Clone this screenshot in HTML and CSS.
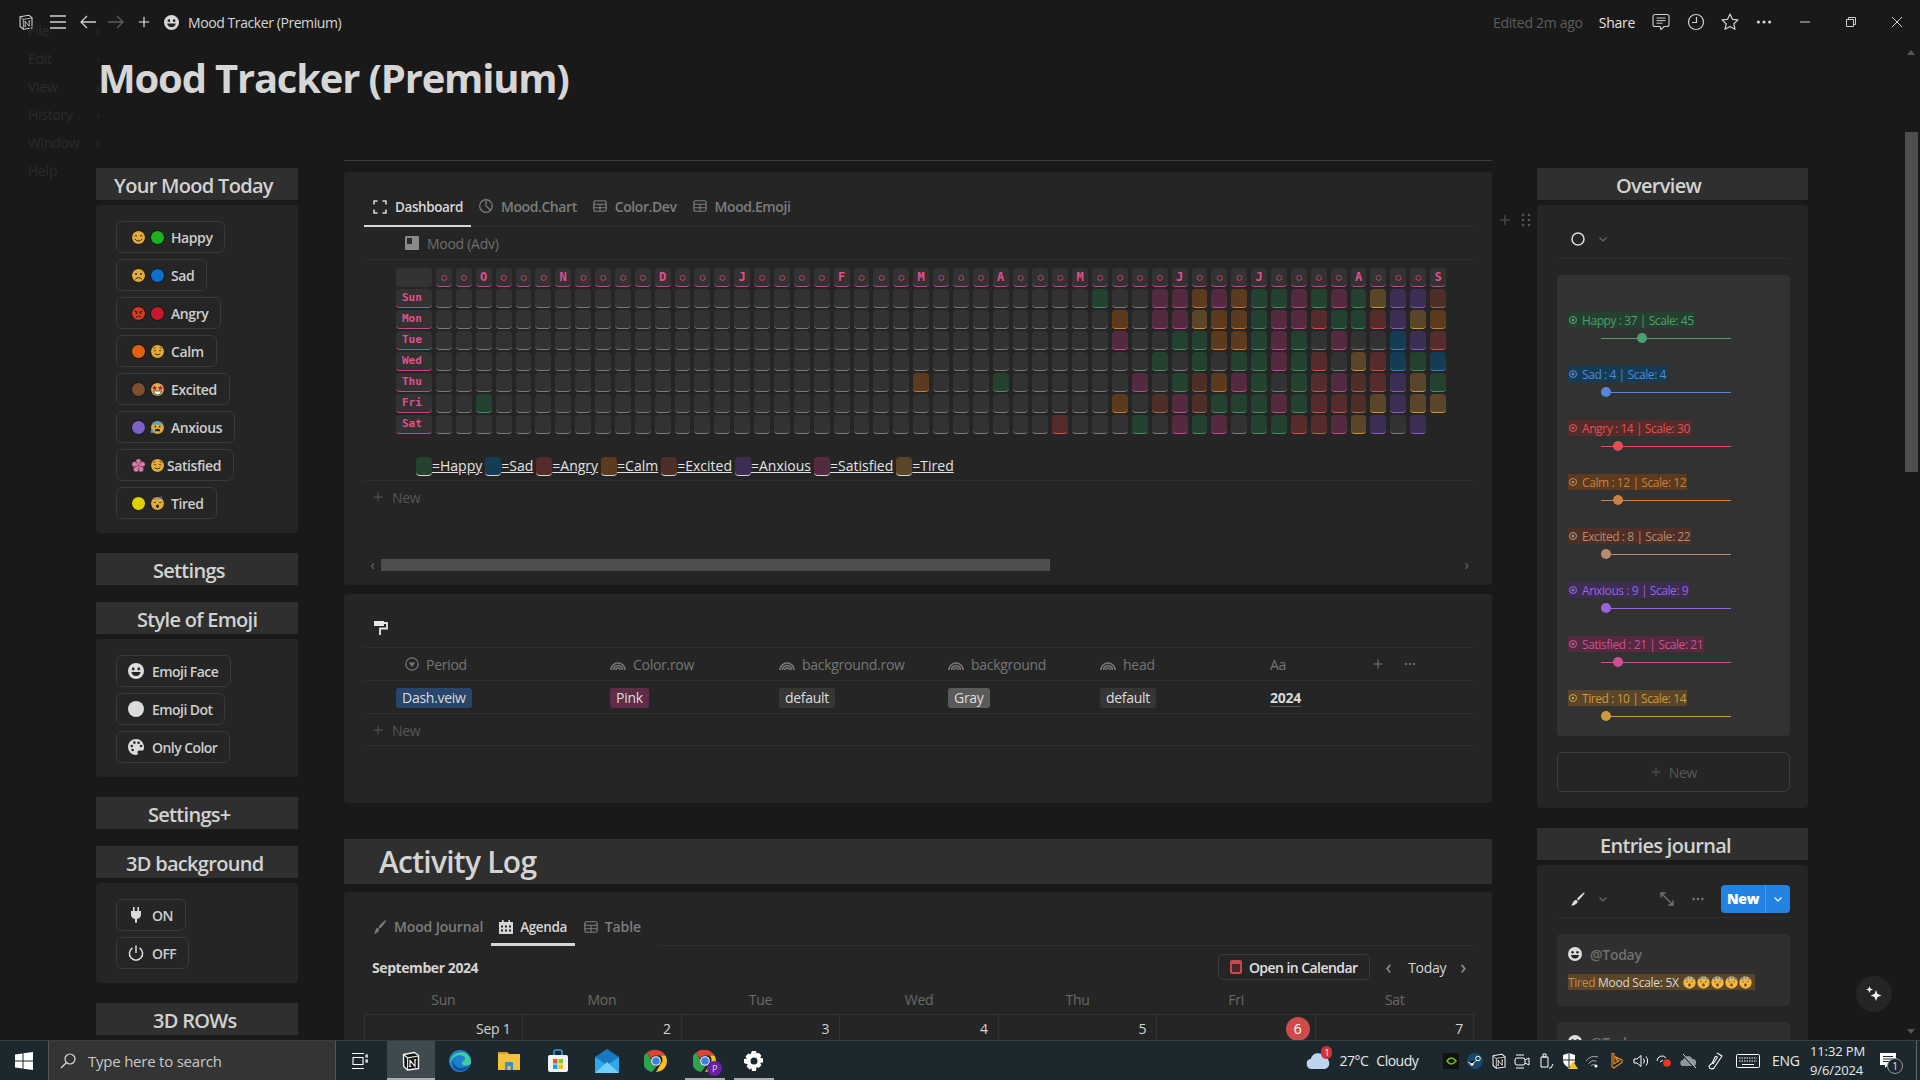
FILE: index.html
```html
<!DOCTYPE html>
<html lang="en">
<head>
<meta charset="utf-8">
<title>Mood Tracker (Premium)</title>
<link rel="stylesheet" href="styles.css">
</head>
<body>
<svg class="defs" aria-hidden="true">
  <symbol id="smile" viewBox="0 0 16 16"><circle cx="8" cy="8" r="7.4" fill="#e3ad3b" stroke="#111"/><path d="M4 6.5q1.2-1.4 2.4 0M9.6 6.5q1.2-1.4 2.4 0" fill="none" stroke="#222"/><path d="M4 9.5q4 4.5 8 0" fill="none" stroke="#222"/></symbol>
  <symbol id="sad" viewBox="0 0 16 16"><circle cx="8" cy="8" r="7.4" fill="#e3ad3b" stroke="#111"/><circle cx="5.4" cy="6.4" r="1" fill="#222"/><circle cx="10.6" cy="6.4" r="1" fill="#222"/><path d="M4.6 12q3.4-3.4 6.8 0" fill="none" stroke="#222"/></symbol>
  <symbol id="angry" viewBox="0 0 16 16"><circle cx="8" cy="8" r="7.4" fill="#d93c1c" stroke="#111"/><path d="M3.6 5l3.4 1.8M12.4 5L9 6.8" stroke="#222" stroke-width="1.2"/><circle cx="5.6" cy="7.6" r=".9" fill="#222"/><circle cx="10.4" cy="7.6" r=".9" fill="#222"/><path d="M5 12q3-2.4 6 0" fill="none" stroke="#222"/></symbol>
  <symbol id="calm" viewBox="0 0 16 16"><circle cx="8" cy="8" r="7.4" fill="#e3ad3b" stroke="#111"/><path d="M4 6.8q1.2 1.2 2.4 0M9.6 6.8q1.2 1.2 2.4 0M3.6 4.6l2.2-.8M12.4 4.6l-2.2-.8" fill="none" stroke="#222" stroke-width=".8"/><path d="M5 10.4q3 2.6 6 0" fill="none" stroke="#222"/></symbol>
  <symbol id="star" viewBox="0 0 16 16"><circle cx="8" cy="8" r="7.4" fill="#e3ad3b" stroke="#111"/><path d="M4.9 3.6l.9 1.6 1.7.3-1.2 1.3.2 1.8-1.6-.8-1.6.8.2-1.8-1.2-1.3 1.7-.3zM11.1 3.6l.9 1.6 1.7.3-1.2 1.3.2 1.8-1.6-.8-1.6.8.2-1.8-1.2-1.3 1.7-.3z" fill="#b0127a"/><path d="M3.8 9.6h8.4q-.6 4.2-4.2 4.2T3.8 9.6z" fill="#fff" stroke="#222" stroke-width=".7"/></symbol>
  <symbol id="anxious" viewBox="0 0 16 16"><circle cx="8" cy="8" r="7.4" fill="#e3ad3b" stroke="#111"/><path d="M2 5a7 7 0 0 1 12 0z" fill="#4aa3d8"/><circle cx="5.6" cy="7" r=".9" fill="#222"/><circle cx="10.4" cy="7" r=".9" fill="#222"/><path d="M5.2 12q0-2.6 2.8-2.6t2.8 2.6z" fill="#222"/><path d="M2.2 9q2 3 1.2 4.6a1.8 1.8 0 0 1-3-1z" fill="#2aa0e0"/></symbol>
  <symbol id="flower" viewBox="0 0 16 16"><g fill="#d47ba6" stroke="#111" stroke-width=".5"><circle cx="8" cy="3.7" r="3"/><circle cx="12.2" cy="6.7" r="3"/><circle cx="10.6" cy="11.9" r="3"/><circle cx="5.4" cy="11.9" r="3"/><circle cx="3.8" cy="6.7" r="3"/></g><circle cx="8" cy="8" r="2.6" fill="#d47ba6"/><circle cx="8" cy="8" r="1" fill="#c2126a"/></symbol>
  <symbol id="sleep" viewBox="0 0 16 16"><circle cx="8" cy="8" r="7.4" fill="#e3ad3b" stroke="#111"/><path d="M3.6 6.6q1.4 1 2.8 0M9.6 6.6q1.4 1 2.8 0" fill="none" stroke="#222" stroke-width=".8"/><ellipse cx="8" cy="11" rx="1.6" ry="1.9" fill="#222"/><path d="M8 1.4l1.6 0-1.4 1.6h1.6M11 .8h1.6l-1.4 1.6h1.6M4.6 1.8h1.6L4.8 3.4h1.6" fill="none" stroke="#4a6ed8" stroke-width=".8"/></symbol>
  <symbol id="sleep-y" viewBox="0 0 16 16"><circle cx="8" cy="8" r="7.6" fill="#f3b941"/><path d="M3.6 6.8q1.4 1 2.8 0M9.6 6.8q1.4 1 2.8 0" fill="none" stroke="#6b4a12" stroke-width=".9"/><ellipse cx="8" cy="11" rx="1.7" ry="2" fill="#7a4a12"/><path d="M3 2h2.4L3.4 4h2.2M7 .8h2.4l-2 2h2.2M11 2h2.4l-2 2h2.2" fill="none" stroke="#3d78d0"/></symbol>
  <symbol id="table" viewBox="0 0 16 16"><rect x="1" y="2" width="14" height="12" rx="2" fill="none" stroke="currentColor" stroke-width="1.4"/><path d="M1 6h14M1 10h14M8 6v8" stroke="currentColor" stroke-width="1.2"/></symbol>
  <symbol id="rainbow" viewBox="0 0 16 16"><path d="M1 14a7 7 0 0 1 14 0M3.600 14a4.400 4.400 0 0 1 8.800 0M6 14a2 2 0 0 1 4 0" fill="none" stroke="currentColor" stroke-width="1.700"/></symbol>
  <symbol id="plus" viewBox="0 0 16 16"><path d="M8 2v12M2 8h12" stroke="currentColor" stroke-width="1.3"/></symbol>
  <symbol id="dots" viewBox="0 0 16 16"><g fill="currentColor"><circle cx="3" cy="8" r="1.4"/><circle cx="8" cy="8" r="1.4"/><circle cx="13" cy="8" r="1.4"/></g></symbol>
  <symbol id="chev" viewBox="0 0 10 10"><path d="M1.5 3.5L5 7l3.5-3.5" fill="none" stroke="currentColor" stroke-width="1.1"/></symbol>
  <symbol id="face-w" viewBox="0 0 16 16"><circle cx="8" cy="8" r="8" fill="currentColor"/><circle cx="5.2" cy="6" r="1.4" fill="#252525"/><circle cx="10.8" cy="6" r="1.4" fill="#252525"/><path d="M3.4 9h9.2q-.8 4-4.6 4T3.4 9z" fill="#252525"/></symbol>
  <symbol id="notion" viewBox="0 0 20 20"><path d="M2.5 3.5L13.5 1.5l4 3v13l-11 1.5-3.8-3.4z" fill="#111" stroke="currentColor" stroke-width="1.4" stroke-linejoin="round"/><path d="M2.8 3.8l3.8 3 10.8-1.8M6.6 6.8V19" fill="none" stroke="currentColor" stroke-width="1.1"/><path d="M9 9.2v6M9 9.4l5 6V8.8M8 15.4h2.2M8.4 9.3h1.4M13 8.8h2.2" fill="none" stroke="currentColor" stroke-width="1.2"/></symbol>
</svg>

<div class="app">
  <header class="topbar">
    <svg class="ic16 logo"><use href="#notion"/></svg>
    <svg class="ic16 menu-ic" viewBox="0 0 16 16"><path d="M0 2h16M0 8h16M0 14h16" stroke="currentColor" stroke-width="1.4"/></svg>
    <svg class="ic16 back-ic" viewBox="0 0 16 16"><path d="M1 8h15M7 2L1 8l6 6" fill="none" stroke="currentColor" stroke-width="1.3"/></svg>
    <svg class="ic16 fwd-ic" viewBox="0 0 16 16"><path d="M0 8h15M9 2l6 6-6 6" fill="none" stroke="currentColor" stroke-width="1.3"/></svg>
    <svg class="ic14 add-ic"><use href="#plus"/></svg>
    <svg class="ic15 page-ic"><use href="#face-w"/></svg>
    <span class="page-name">Mood Tracker (Premium)</span>
    <span class="edited">Edited 2m ago</span>
    <span class="share">Share</span>
    <svg class="ic18 comment-ic" viewBox="0 0 18 18"><path d="M3 1.5h12a2 2 0 0 1 2 2v8a2 2 0 0 1-2 2h-3l-3 3-1-3H3a2 2 0 0 1-2-2v-8a2 2 0 0 1 2-2z" fill="none" stroke="currentColor" stroke-width="1.1"/><path d="M4.5 5h9M4.5 7.6h9M4.5 10.2h6" stroke="currentColor"/></svg>
    <svg class="ic18 clock-ic" viewBox="0 0 18 18"><circle cx="9" cy="9" r="7.5" fill="none" stroke="currentColor" stroke-width="1.2"/><path d="M9.5 4v5.5H5" fill="none" stroke="currentColor" stroke-width="1.2"/></svg>
    <svg class="ic18 star-ic" viewBox="0 0 18 18"><path d="M9 1l2.4 5.3 5.6.6-4.2 3.8 1.2 5.6L9 13.4l-5 2.9 1.2-5.6L1 6.9l5.6-.6z" fill="none" stroke="currentColor" stroke-width="1.2" stroke-linejoin="round"/></svg>
    <svg class="ic18 more-ic"><use href="#dots"/></svg>
    <svg class="win-ic min-ic" viewBox="0 0 10 10"><path d="M0 5h10" stroke="currentColor"/></svg>
    <svg class="win-ic max-ic" viewBox="0 0 10 10"><path d="M.5 2.5h7v7h-7zM2.5 2.5v-2h7v7h-2" fill="none" stroke="currentColor"/></svg>
    <svg class="win-ic close-ic" viewBox="0 0 10 10"><path d="M0 0l10 10M10 0L0 10" stroke="currentColor"/></svg>
  </header>

  <main class="page">
    <h1 class="title">Mood Tracker (Premium)</h1>
    <div class="columns">
      <aside class="left">
        <h2 class="bar l-mood">Your Mood Today</h2>
        <div class="panel btns">
          <a class="btn"><svg class="ic15"><use href="#smile"/></svg><i class="dot d-green"></i><span class="lbl">Happy</span></a>
          <a class="btn"><svg class="ic15"><use href="#sad"/></svg><i class="dot d-blue"></i><span class="lbl">Sad</span></a>
          <a class="btn"><svg class="ic15"><use href="#angry"/></svg><i class="dot d-red"></i><span class="lbl">Angry</span></a>
          <a class="btn"><i class="dot d-orange"></i><svg class="ic15"><use href="#calm"/></svg><span class="lbl">Calm</span></a>
          <a class="btn"><i class="dot d-brown"></i><svg class="ic15"><use href="#star"/></svg><span class="lbl">Excited</span></a>
          <a class="btn"><i class="dot d-purple"></i><svg class="ic15"><use href="#anxious"/></svg><span class="lbl">Anxious</span></a>
          <a class="btn"><svg class="ic15"><use href="#flower"/></svg><svg class="ic15"><use href="#calm"/></svg><span class="lbl tight">Satisfied</span></a>
          <a class="btn"><i class="dot d-yellow"></i><svg class="ic15"><use href="#sleep"/></svg><span class="lbl">Tired</span></a>
        </div>
        <h2 class="bar gap-b l-settings">Settings</h2>
        <h2 class="bar gap-a l-style">Style of Emoji</h2>
        <div class="panel btns">
          <a class="btn solo"><svg class="ic16 wht"><use href="#face-w"/></svg><span class="lbl">Emoji Face</span></a>
          <a class="btn solo"><i class="wdot"></i><span class="lbl">Emoji Dot</span></a>
          <a class="btn solo"><svg class="ic16 wht" viewBox="0 0 16 16"><path d="M8 0a8 8 0 0 0 0 16c1.6 0 2-1 1.6-2-.5-1.4.4-2.4 1.8-2.4H14c1.2 0 2-1 2-3.2C16 3.4 12.4 0 8 0z" fill="currentColor"/><g fill="#252525"><circle cx="3.8" cy="7" r="1.3"/><circle cx="6.4" cy="3.6" r="1.3"/><circle cx="10.6" cy="3.8" r="1.3"/><circle cx="13" cy="7" r="1.3"/><circle cx="4.6" cy="11" r="1.3"/></g></svg><span class="lbl">Only Color</span></a>
        </div>
        <h2 class="bar gap-b l-plus">Settings+</h2>
        <h2 class="bar gap-a l-bg">3D background</h2>
        <div class="panel btns">
          <a class="btn solo"><svg class="ic16 wht" viewBox="0 0 16 16"><path d="M5 0h1.6v4H5zM9.4 0H11v4H9.4zM3 4h10v3.5a5 5 0 0 1-4 4.6V15a1 1 0 0 1-2 0v-2.9a5 5 0 0 1-4-4.6z" fill="currentColor"/></svg><span class="lbl">ON</span></a>
          <a class="btn solo"><svg class="ic16 wht" viewBox="0 0 16 16"><path d="M4.4 3a6.6 6.6 0 1 0 7.2 0M8 .5V8" fill="none" stroke="currentColor" stroke-width="1.5"/></svg><span class="lbl">OFF</span></a>
        </div>
        <h2 class="bar gap-b l-rows">3D ROWs</h2>
      </aside>

      <section class="mid">
        <div class="panel board">
          <nav class="tabs">
            <a class="tab active first"><svg class="ic14" viewBox="0 0 14 14"><path d="M1 4.5V1h3.5M9.5 1H13v3.5M13 9.5V13H9.5M4.5 13H1V9.5" fill="none" stroke="currentColor" stroke-width="1.6"/></svg>Dashboard</a>
            <a class="tab"><svg class="ic14" viewBox="0 0 14 14"><circle cx="7" cy="7" r="6.3" fill="none" stroke="currentColor" stroke-width="1.2"/><path d="M7 .7V7l4.5 4" fill="none" stroke="currentColor" stroke-width="1.2"/></svg>Mood.Chart</a>
            <a class="tab"><svg class="ic14"><use href="#table"/></svg>Color.Dev</a>
            <a class="tab"><svg class="ic14"><use href="#table"/></svg>Mood.Emoji</a>
          </nav>
          <div class="db-title"><svg class="ic14" viewBox="0 0 14 14"><rect width="14" height="14" rx="1" fill="#8a8a8a"/><rect x="2" y="2" width="5" height="6" fill="#2a2a2a"/></svg>Mood (Adv)</div>
          <div class="heat" id="heat"></div>
          <div class="legend">
            <span class="swatch k-g"></span><u>=Happy</u>
            <span class="swatch k-b"></span><u>=Sad</u>
            <span class="swatch k-r"></span><u>=Angry</u>
            <span class="swatch k-o"></span><u>=Calm</u>
            <span class="swatch k-e"></span><u>=Excited</u>
            <span class="swatch k-p"></span><u>=Anxious</u>
            <span class="swatch k-s"></span><u>=Satisfied</u>
            <span class="swatch k-t"></span><u>=Tired</u>
          </div>
          <div class="new-row"><svg class="ic12"><use href="#plus"/></svg>New</div>
          <div class="hscroll"><span class="arr">‹</span><span class="track"><i class="thumbx"></i></span><span class="arr">›</span></div>
        </div>

        <div class="panel cfg">
          <div class="roller"><svg class="ic16" viewBox="0 0 16 16"><path d="M1 1h10v5H1z" fill="#e6e6e6"/><path d="M11 3h3v5.5H7V15" fill="none" stroke="#e6e6e6" stroke-width="1.8"/></svg></div>
          <div class="cfg-grid cfg-head">
            <span class="th th-first"><svg class="ic14" viewBox="0 0 14 14"><circle cx="7" cy="7" r="6.2" fill="none" stroke="currentColor" stroke-width="1.2"/><path d="M3.8 5.5h6.4L7 10z" fill="currentColor"/></svg>Period</span>
            <span class="th"><svg class="ic16"><use href="#rainbow"/></svg>Color.row</span>
            <span class="th"><svg class="ic16"><use href="#rainbow"/></svg>background.row</span>
            <span class="th"><svg class="ic16"><use href="#rainbow"/></svg>background</span>
            <span class="th"><svg class="ic16"><use href="#rainbow"/></svg>head</span>
            <span class="th">Aa</span>
            <span class="th th-tools"><svg class="ic12"><use href="#plus"/></svg><svg class="ic12"><use href="#dots"/></svg></span>
          </div>
          <div class="cfg-grid cfg-row">
            <span><b class="tag t-blue">Dash.veiw</b></span>
            <span><b class="tag t-pink">Pink</b></span>
            <span><b class="tag t-dark">default</b></span>
            <span><b class="tag t-gray">Gray</b></span>
            <span><b class="tag t-dark">default</b></span>
            <span class="yr">2024</span>
            <span></span>
          </div>
          <div class="new-row last"><svg class="ic12"><use href="#plus"/></svg>New</div>
        </div>

        <h2 class="log-bar">Activity Log</h2>

        <div class="panel agenda">
          <nav class="tabs2">
            <a class="tab2"><svg class="ic14" viewBox="0 0 14 14"><path d="M13 0c.6.6-3 6-6 8.4L5.4 7C8 4 12.4-.6 13 0zM4.6 7.8l1.6 1.5C6 12 3 13.6 1 14c1.4-1.4 1-5 3.6-6.2z" fill="currentColor"/></svg>Mood Journal</a>
            <a class="tab2 on"><svg class="ic14" viewBox="0 0 14 14"><path d="M3 0h1.6v2h4.8V0H11v2h3v12H0V2h3z" fill="currentColor"/><path d="M2 5.5h2v2H2zM6 5.5h2v2H6zM10 5.5h2v2h-2zM2 9.5h2v2H2zM6 9.5h2v2H6zM10 9.5h2v2h-2z" fill="#252525"/></svg>Agenda</a>
            <a class="tab2"><svg class="ic14"><use href="#table"/></svg>Table</a>
            <span class="tab-fill"></span>
          </nav>
          <div class="cal-tools">
            <strong class="month">September 2024</strong>
            <a class="open-cal"><svg class="ic14" viewBox="0 0 14 14"><rect x="1" width="12" height="14" rx="2" fill="#c84a4a"/><rect x="3" y="4" width="8" height="8" fill="#4a2626"/></svg>Open in Calendar</a>
            <span class="nav-ar l">‹</span><span class="today">Today</span><span class="nav-ar r">›</span>
          </div>
          <div class="weekdays"><span>Sun</span><span>Mon</span><span>Tue</span><span>Wed</span><span>Thu</span><span>Fri</span><span>Sat</span></div>
          <div class="days">
            <span class="day">Sep 1</span><span class="day">2</span><span class="day">3</span><span class="day">4</span><span class="day">5</span><span class="day"><em class="now">6</em></span><span class="day">7</span>
          </div>
        </div>
      </section>

      <aside class="right">
        <h2 class="bar r-over">Overview</h2>
        <div class="panel over">
          <div class="gal-tools"><svg class="ic14" viewBox="0 0 14 14"><circle cx="7" cy="7" r="6" fill="none" stroke="#ddd" stroke-width="1.5"/></svg><svg class="ic10"><use href="#chev"/></svg></div>
          <div class="meter-card">
            <div class="meter m-g"><span class="m-lab"><i class="rad"></i>Happy : 37 | Scale: 45</span><div class="m-line"><i class="m-th" style="left:36px"></i></div></div>
            <div class="meter m-b"><span class="m-lab"><i class="rad"></i>Sad : 4 | Scale: 4</span><div class="m-line"><i class="m-th" style="left:0"></i></div></div>
            <div class="meter m-r"><span class="m-lab"><i class="rad"></i>Angry : 14 | Scale: 30</span><div class="m-line"><i class="m-th" style="left:12px"></i></div></div>
            <div class="meter m-o"><span class="m-lab"><i class="rad"></i>Calm : 12 | Scale: 12</span><div class="m-line"><i class="m-th" style="left:12px"></i></div></div>
            <div class="meter m-e"><span class="m-lab"><i class="rad"></i>Excited : 8 | Scale: 22</span><div class="m-line"><i class="m-th" style="left:0"></i></div></div>
            <div class="meter m-p"><span class="m-lab"><i class="rad"></i>Anxious : 9 | Scale: 9</span><div class="m-line"><i class="m-th" style="left:0"></i></div></div>
            <div class="meter m-s"><span class="m-lab"><i class="rad"></i>Satisfied : 21 | Scale: 21</span><div class="m-line"><i class="m-th" style="left:12px"></i></div></div>
            <div class="meter m-t"><span class="m-lab"><i class="rad"></i>Tired : 10 | Scale: 14</span><div class="m-line"><i class="m-th" style="left:0"></i></div></div>
          </div>
          <div class="new-btn"><svg class="ic12"><use href="#plus"/></svg>New</div>
        </div>
        <h2 class="bar gap-b r-ent">Entries journal</h2>
        <div class="panel ent">
          <div class="ent-tools">
            <svg class="ic14 wht" viewBox="0 0 14 14"><path d="M13.6.4c.5.5-3.6 6-6.2 8L6 7C8 4.400 13.100-.1 13.600.4zM5.200 7.800L6.700 9.300C6.300 12 3 14 0 13.500c1.700-1 1.500-4.900 5.200-5.700z" fill="currentColor"/></svg>
            <svg class="ic10"><use href="#chev"/></svg>
            <svg class="ic14 exp" viewBox="0 0 14 14"><path d="M1 1l12 12M1 5.500V1h4.500M13 8.500V13H8.500" fill="none" stroke="currentColor" stroke-width="1.300"/></svg>
            <svg class="ic14 ent-more"><use href="#dots"/></svg>
            <span class="blue-btn"><b>New</b><i><svg class="ic10"><use href="#chev"/></svg></i></span>
          </div>
          <article class="ent-card">
            <div class="ent-date"><svg class="ic14 wht"><use href="#face-w"/></svg>@Today</div>
            <div class="ent-line"><span class="tired">Tired</span> Mood Scale: 5X <svg class="ic13"><use href="#sleep-y"/></svg><svg class="ic13"><use href="#sleep-y"/></svg><svg class="ic13"><use href="#sleep-y"/></svg><svg class="ic13"><use href="#sleep-y"/></svg><svg class="ic13"><use href="#sleep-y"/></svg></div>
          </article>
          <article class="ent-card">
            <div class="ent-date"><svg class="ic14 wht"><use href="#face-w"/></svg>@Today</div>
          </article>
        </div>
      </aside>
    </div>
    <div class="block-tools"><svg class="ic14"><use href="#plus"/></svg><svg class="ic14" viewBox="0 0 14 14"><g fill="currentColor"><circle cx="4" cy="2" r="1.300"/><circle cx="10" cy="2" r="1.300"/><circle cx="4" cy="7" r="1.300"/><circle cx="10" cy="7" r="1.300"/><circle cx="4" cy="12" r="1.300"/><circle cx="10" cy="12" r="1.300"/></g></svg></div>
    <div class="vscroll"><span class="vup"></span><span class="vthumb"></span><span class="vdn"></span></div>
    <div class="spark"><svg class="ic18" viewBox="0 0 18 18"><path d="M11 5l1.500 4 4 1.500-4 1.500-1.500 4-1.500-4-4-1.500 4-1.500zM4.500 1l.9 2.600 2.600.9-2.600.9-.9 2.600-.9-2.600L1 4.500l2.600-.9z" fill="#eee"/></svg></div>
  </main>

  <nav class="ghost-menu"><span>File</span><span>Edit</span><span>View</span><span>History</span><span>Window</span><span>Help</span></nav>

  <footer class="taskbar">
    <svg class="tb-win" viewBox="0 0 18 18"><path d="M0 2.500l7.500-1v7H0zM8.500 1.300L18 0v8.500H8.500zM0 9.500h7.500v7L0 15.500zM8.500 9.500H18V18l-9.500-1.300z" fill="#fff"/></svg>
    <div class="tb-search"><svg class="ic16" viewBox="0 0 16 16"><circle cx="10" cy="6" r="5" fill="none" stroke="#ddd" stroke-width="1.200"/><path d="M6.500 9.500L1 15" stroke="#ddd" stroke-width="1.200"/></svg>Type here to search</div>
    <svg class="tb-view" viewBox="0 0 16 16"><path d="M0 .5h12M0 15.500h12M1 4.500h10v7H1zM14 2h2v2h-2zM14 7h2v2h-2z" fill="none" stroke="#fff" stroke-width="1.100"/></svg>
    <div class="tb-apps">
      <span class="app-t active"><svg class="ic20 n-wht"><use href="#notion"/></svg></span>
      <span class="app-t"><svg class="ic24" viewBox="0 0 24 24"><circle cx="12" cy="12" r="11" fill="#1f7fcf"/><path d="M2 14C2 6 10 2 16 3.500c5 1.500 7 6 7 9.500 0 3-3 3.500-6 3.500-2 0-3-1-3-2.500 0-2.500 3-2 3-4.500C17 7 13 5.500 9.500 6.500 5 8 3.500 11 2 14z" fill="#3ccf9a"/><path d="M9 21c-4-2-5-6-4-9 1 4 4 7 8 7 3 0 6-1 8-3-2 5-8 7-12 5z" fill="#0d4f9a"/></svg></span>
      <span class="app-t"><svg class="ic24" viewBox="0 0 24 24"><path d="M1 3h9l2 2h11v16H1z" fill="#f2c23e"/><path d="M1 3h9l2 2H1z" fill="#d99a1e"/><path d="M8 21v-7a1 1 0 0 1 1-1h6a1 1 0 0 1 1 1v7z" fill="#2f8fdc"/><path d="M10.500 21v-4h3v4z" fill="#f2c23e"/></svg></span>
      <span class="app-t"><svg class="ic24" viewBox="0 0 24 24"><path d="M8 6V3a2 2 0 0 1 2-2h4a2 2 0 0 1 2 2v3" fill="none" stroke="#25a5e8" stroke-width="1.600"/><rect x="2" y="6" width="20" height="17" rx="2" fill="#f2f2f2"/><rect x="7" y="10" width="4.500" height="4.500" fill="#f1511b"/><rect x="12.500" y="10" width="4.500" height="4.500" fill="#80cc28"/><rect x="7" y="15.500" width="4.500" height="4.500" fill="#00adef"/><rect x="12.500" y="15.500" width="4.500" height="4.500" fill="#fbbc09"/></svg></span>
      <span class="app-t"><svg class="ic24" viewBox="0 0 24 24"><path d="M0 8l12-8 12 8v16H0z" fill="#1a78c2"/><path d="M0 8l12 8 12-8v16H0z" fill="#2ea8ea"/><path d="M0 24l12-11 12 11z" fill="#71d0f8"/></svg></span>
      <span class="app-t"><svg class="ic24" viewBox="0 0 24 24"><use href="#chrome"/></svg></span>
      <span class="app-t under"><svg class="ic24" viewBox="0 0 24 24"><use href="#chrome"/></svg><i class="prof">P</i></span>
      <span class="app-t under"><svg class="ic20" viewBox="0 0 20 20"><path d="M8 0h4l.6 2.600 2-.8 2.800 2.800-1.200 2.200 2.800.6v4l-2.800.6 1.200 2.200-2.800 2.800-2-1.200L12 20H8l-.6-2.800-2 1.200-2.800-2.800 1.200-2.200L0 12V8l2.800-.6L1.600 5.200 4.400 2.400l2 1.200z" fill="#fff"/><circle cx="10" cy="10" r="3.500" fill="#1c282d"/></svg></span>
    </div>
    <svg class="defs"><symbol id="chrome" viewBox="0 0 24 24"><path d="M12 1a11 11 0 0 1 9.500 5.500H12A5.500 5.500 0 0 0 7 9.500L3 3.500A11 11 0 0 1 12 1z" fill="#e04434"/><path d="M21.500 6.500A11 11 0 0 1 12 23l4.600-8a5.500 5.500 0 0 0 0-8.500z" fill="#fbc116"/><path d="M3 3.500l4.700 8.100A5.500 5.500 0 0 0 12 17.500l.6 0L8 23A11 11 0 0 1 3 3.500z" fill="#2fa24d"/><circle cx="12" cy="12" r="4.800" fill="#fff"/><circle cx="12" cy="12" r="3.800" fill="#3d7fe6"/></symbol></svg>
    <div class="tb-tray">
      <span class="wx"><svg class="wx-ic" viewBox="0 0 26 20"><path d="M6 19a5.500 5.500 0 0 1-1-10.900A7.500 7.500 0 0 1 19 6.500 6.500 6.500 0 0 1 20 19z" fill="#bcd6f2"/></svg><i class="wx-badge">1</i><span>27°C</span><span>Cloudy</span></span>
      <span class="tray"><svg class="ic16" viewBox="0 0 16 16"><rect width="16" height="16" fill="#111"/><path d="M4 8q4-6 9 0-5 6-9 0z" fill="none" stroke="#76b900" stroke-width="1.600"/></svg></span>
      <span class="tray"><svg class="ic16" viewBox="0 0 16 16"><circle cx="8" cy="8" r="8" fill="#17486e"/><circle cx="11" cy="5.500" r="2.300" fill="none" stroke="#fff"/><circle cx="5" cy="11" r="1.800" fill="#fff"/><path d="M1 9l4 2 5-4" stroke="#fff"/></svg></span>
      <span class="tray"><svg class="ic16 n-wht"><use href="#notion"/></svg></span>
      <span class="tray"><svg class="ic16" viewBox="0 0 16 16"><rect x="1" y="5" width="10" height="7" rx="2" fill="none" stroke="#fff"/><path d="M11 7l4-2v7l-4-2M2 2h8M2 15h8" fill="none" stroke="#fff"/></svg></span>
      <span class="tray"><svg class="ic16" viewBox="0 0 16 16"><path d="M3 4h7v10H3zM5 1h3v3H5zM11 15l2 0 2-4" fill="none" stroke="#fff"/></svg></span>
      <span class="tray"><svg class="ic16" viewBox="0 0 16 16"><path d="M7 0l6 2v5c0 4-3 6-6 8-3-2-6-4-6-8V2z" fill="#fff"/><path d="M11 8l5 8H6z" fill="#f5c518"/><path d="M7 0v15M1 7h12" stroke="#222"/></svg></span>
      <span class="tray"><svg class="ic16" viewBox="0 0 16 16"><path d="M1 8a11 11 0 0 1 12-4M3.500 10.500a7 7 0 0 1 8-2.500M6 13a3 3 0 0 1 4-1" fill="none" stroke="#aaa"/><circle cx="11" cy="13" r="1.500" fill="#fff"/></svg></span>
      <span class="tray"><svg class="ic16" viewBox="0 0 16 16"><path d="M3 0l2 .8v10l5-3-2.500-1L6.500 4l6.500 3v2.500L5 15l-2-1.500z" fill="none" stroke="#e58b1f" stroke-width="1.200"/></svg></span>
      <span class="tray"><svg class="ic16" viewBox="0 0 16 16"><path d="M1 6h3l4-3.500v11L4 10H1zM10.500 5.500a4 4 0 0 1 0 5M13 3.500a7 7 0 0 1 0 9" fill="none" stroke="#fff"/></svg></span>
      <span class="tray"><svg class="ic16" viewBox="0 0 16 16"><path d="M1 8a5 5 0 0 1 9-3" fill="none" stroke="#fff"/><path d="M4 9l3-2" stroke="#fff"/><circle cx="11" cy="10" r="3.800" fill="#e8371a"/></svg></span>
      <span class="tray"><svg class="ic16" viewBox="0 0 16 16"><path d="M3.500 13a3 3 0 0 1-.4-6A5 5 0 0 1 12.500 6 3.500 3.500 0 0 1 13 13z" fill="#8f979b"/><path d="M2 1l13 14" stroke="#1c282d" stroke-width="1.500"/><path d="M3 1l13 14" stroke="#ddd"/></svg></span>
      <span class="tray wide"><svg class="ic18" viewBox="0 0 18 18"><path d="M11 1l5 3-8 12c-1.500 1.500-5 1-5-1.500 0-2 3-2 3.500-4L9 5c1-1.500 3-.500 2 1L7 12" fill="none" stroke="#fff" stroke-width="1.100"/></svg></span>
      <span class="tray kb"><svg class="kb-ic" viewBox="0 0 24 14"><rect x=".5" y=".5" width="23" height="13" rx="1" fill="none" stroke="#fff"/><path d="M3 4h18M3 7h18" stroke="#fff" stroke-dasharray="1.500 1"/><path d="M6 10.500h12" stroke="#fff"/></svg></span>
      <span class="eng">ENG</span>
      <span class="clock"><span>11:32 PM</span><span>9/6/2024</span></span>
      <span class="notif"><svg class="ic18" viewBox="0 0 18 18"><path d="M1 1h16v12H9l-3 3v-3H1z" fill="#fff"/><path d="M4 4.500h10M4 7h10M4 9.500h7" stroke="#1c282d"/></svg><i class="n-badge">1</i></span>
    </div>
    <i class="tb-edge"></i>
  </footer>
</div>
<script src="script.js"></script>
</body>
</html>
```

FILE: styles.css
```css
* { box-sizing: border-box; }
html, body { margin: 0; height: 100%; background: #191919; overflow: hidden; }
body { font-family: "Open Sans", "Noto Sans", sans-serif; font-size: 14px; color: #d4d4d4; letter-spacing: -.02em; }
a { color: inherit; text-decoration: none; }
h1, h2 { margin: 0; }
.defs { position: absolute; width: 0; height: 0; overflow: hidden; }
svg { display: block; flex: none; }
.ic10 { width: 10px; height: 10px; color: #6a6a6a; }
.ic12 { width: 12px; height: 12px; }
.ic13 { width: 13px; height: 13px; margin-left: 1px; }
.ic14 { width: 14px; height: 14px; }
.ic15 { width: 15px; height: 15px; }
.ic16 { width: 16px; height: 16px; }
.ic18 { width: 18px; height: 18px; }
.ic20 { width: 20px; height: 20px; }
.ic24 { width: 24px; height: 24px; }
.wht { color: #dcdcdc; }

.app { position: relative; width: 1920px; height: 1080px; display: flex; flex-direction: column; overflow: hidden; }

/* top bar */
.topbar { height: 44px; flex: none; display: flex; align-items: center; padding-left: 18px; color: #cfcfcf; }
.menu-ic { margin-left: 16px; }
.back-ic { margin-left: 14px; }
.fwd-ic { margin-left: 12px; color: #5c5c5c; }
.add-ic { margin-left: 13px; color: #e6e6e6; }
.page-ic { margin-left: 13px; color: #d8d8d8; }
.page-name { margin-left: 9px; color: #d6d6d6; width: 153px; white-space: nowrap; letter-spacing: -.03em; }
.edited { margin-left: auto; color: #5d5d5d; white-space: nowrap; }
.share { margin-left: 16px; color: #e2e2e2; }
.comment-ic { margin-left: 17px; }
.clock-ic { margin-left: 17px; }
.star-ic { margin-left: 16px; }
.more-ic { margin-left: 16px; color: #d6d6d6; }
.win-ic { width: 10px; height: 10px; }
.min-ic { margin-left: 27px; }
.max-ic { margin-left: 36px; }
.close-ic { margin-left: 36px; margin-right: 18px; }

/* page */
.page { flex: 1; min-height: 0; position: relative; overflow: hidden; padding-left: 96px; }
.title { margin: 0 0 0 2px; height: 116px; padding-top: 11px; font-size: 40px; line-height: 46px; font-weight: 700; color: #d6d6d6; white-space: nowrap; letter-spacing: -.03em; }
.bar { height: 32px; background: #2f2f2f; font-size: 20px; line-height: 35px; font-weight: 600; color: #d2d2d2; white-space: nowrap; letter-spacing: -.035em; overflow: visible; }
.gap-a { margin-top: 17px; }
.gap-b { margin-top: 20px; }
.l-mood { padding-left: 18px; }
.l-settings { padding-left: 57px; }
.l-style { padding-left: 41px; }
.l-plus { padding-left: 52px; }
.l-bg { padding-left: 30px; }
.l-rows { padding-left: 57px; }
.r-over { padding-left: 79px; }
.r-ent { padding-left: 63px; }
.columns { display: grid; grid-template-columns: 202px 1148px 270px; column-gap: 46px; align-items: start; }
.columns > .right { margin-left: -1px; }
.left, .right { padding-top: 8px; }
.panel { background: #252525; border-radius: 4px; margin-top: 5px; }
.btns { display: flex; flex-direction: column; align-items: flex-start; gap: 6px; padding: 16px 20px 14px; }
.btn { height: 32px; border: 1px solid #393939; border-radius: 6px; display: inline-flex; align-items: center; padding: 0 12px 0 14px; gap: 4px; font-weight: 600; color: #cdcdcd; letter-spacing: -.03em; }
.dot { width: 15px; height: 15px; border-radius: 50%; border: 1px solid #111; display: block; flex: none; }
.d-green { background: #1eb01e; } .d-blue { background: #0c6fca; } .d-red { background: #c9172c; }
.d-orange { background: #e05f10; } .d-brown { background: #7c5030; } .d-purple { background: #7e60c6; } .d-yellow { background: #dcd200; }
.lbl { margin-left: 2px; white-space: nowrap; }
.lbl.tight { margin-left: -2px; }
.btn.solo { padding: 0 12px 0 11px; gap: 8px; letter-spacing: -.04em; }
.solo .lbl { margin-left: 0; }
.wdot { width: 16px; height: 16px; border-radius: 50%; background: #dcdcdc; display: block; }

/* middle */
.mid { border-top: 1px solid #3a3a3a; }
.board { margin-top: 11px; padding: 14px 17px 14px 20px; height: 413px; }
.tabs { display: flex; height: 41px; border-bottom: 1px solid #2e2e2e; }
.tab { height: 40px; padding: 0 8px; display: flex; align-items: center; gap: 8px; color: #7d7d7d; font-weight: 600; font-size: 14px; letter-spacing: -.03em; white-space: nowrap; }
.tab.first { padding-left: 9px; }
.tab.active { color: #d6d6d6; box-shadow: inset 0 -2px #d6d6d6; height: 41px; font-size: 13.5px; }
.db-title { height: 33px; border-bottom: 1px solid #2e2e2e; padding-left: 41px; display: flex; align-items: center; gap: 8px; color: #6f6f6f; }
.heat { margin: 8px 0 0 32px; width: 1050px; display: grid; grid-template-columns: 36px repeat(51, 1fr); grid-auto-rows: 19px; gap: 2px 4px; }
.c { background: #323232; border-radius: 4px; border-bottom: 1px solid #7a7a7a; display: block; }
.corner { border-bottom: 0; background: #333; }
.hd, .day-l { border-bottom-color: #c4478b; color: #e0508f; font: 700 12px/18px "DejaVu Sans Mono", monospace; letter-spacing: 0; text-align: center; }
.hd.circ { font-weight: 400; font-size: 9px; }
.day-l { font-size: 11px; text-align: left; padding-left: 6px; }
.k-g { background: #24402f; border-color: #3f9063; } .k-b { background: #143d55; border-color: #3d80c8; }
.k-r { background: #552b2b; border-color: #d94f4a; } .k-o { background: #5c3a1e; border-color: #d07a30; }
.k-e { background: #4e2f27; border-color: #a66a50; } .k-p { background: #3c2d52; border-color: #8a5cc8; }
.k-s { background: #532a40; border-color: #c24b8e; } .k-t { background: #5b4528; border-color: #cf9638; }
.legend { margin: 23px 0 4px 52px; height: 19px; display: flex; align-items: flex-start; }
.swatch { width: 16px; height: 19px; border-radius: 4px; border-bottom: 1px solid; flex: none; }
.legend u { line-height: 17px; margin-right: 3px; color: #e2e2e2; white-space: nowrap; text-underline-offset: 1px; letter-spacing: 0; }
.new-row { height: 33px; border-top: 1px solid #2e2e2e; display: flex; align-items: center; gap: 8px; padding-left: 8px; color: #565656; }
.hscroll { margin-top: 46px; height: 12px; display: flex; align-items: center; color: #6a6a6a; }
.arr { width: 17px; text-align: center; font-size: 14px; line-height: 12px; }
.track { flex: 1; height: 12px; display: block; }
.thumbx { display: block; width: 669px; height: 12px; background: #4e4e4e; }
.cfg { margin-top: 9px; height: 209px; padding: 0 18px 0 20px; }
.roller { height: 54px; padding: 26px 0 0 9px; border-bottom: 1px solid #2e2e2e; }
.cfg-grid { display: grid; grid-template-columns: 246px 169px 169px 152px 170px 102px 60px; align-items: center; border-bottom: 1px solid #2e2e2e; }
.cfg-head { height: 33px; padding-left: 0; }
.cfg-row { height: 33px; padding-top: 1px; }
.cfg-row > span:first-child { padding-left: 32px; }
.th { display: flex; align-items: center; gap: 7px; color: #767676; white-space: nowrap; }
.th-first { padding-left: 41px; }
.th-tools { gap: 20px; color: #7c7c7c; margin-left: 0; }
.tag { display: inline-block; height: 20px; line-height: 20px; padding: 0 6px; border-radius: 3px; font-weight: 400; color: #dcdcdc; white-space: nowrap; }
.t-blue { background: #28456c; } .t-pink { background: #5f2c47; } .t-dark { background: #363636; } .t-gray { background: #5a5a5a; }
.yr { font-weight: 700; color: #d8d8d8; justify-self: start; border-bottom: 1px solid #555; line-height: 17px; }
.new-row.last { border-top: 0; border-bottom: 1px solid #2e2e2e; height: 32px; padding-top: 1px; }
.log-bar { margin-top: 36px; height: 45px; background: #2f2f2f; padding-left: 35px; font-size: 30px; line-height: 46px; font-weight: 600; color: #d4d4d4; letter-spacing: -.025em; }
.agenda { margin-top: 8px; padding: 15px 18px 0 20px; height: 400px; }
.tabs2 { display: flex; height: 39px; }
.tab2 { display: flex; align-items: center; gap: 7px; padding: 0 8px 0 9px; color: #7d7d7d; font-weight: 600; font-size: 14px; letter-spacing: -.01em; white-space: nowrap; }
.tab2.on { color: #d6d6d6; box-shadow: inset 0 -3px #d6d6d6; padding: 0 8px; font-size: 13.5px; letter-spacing: -.03em; }
.tab-fill { flex: 1; margin-left: 8px; border-bottom: 1px solid #2e2e2e; }
.cal-tools { display: flex; align-items: center; height: 26px; margin-top: 8px; padding-left: 8px; }
.month { font-weight: 700; color: #d4d4d4; letter-spacing: -.03em; }
.open-cal { margin-left: auto; height: 26px; border: 1px solid #3a3a3a; border-radius: 5px; padding: 0 12px 0 10px; display: flex; align-items: center; gap: 6px; font-weight: 600; color: #e0e0e0; white-space: nowrap; letter-spacing: -.04em; }
.nav-ar { font-size: 20px; line-height: 20px; color: #9a9a9a; }
.nav-ar.l { margin-left: 15px; }
.nav-ar.r { margin: 0 8px 0 14px; }
.today { margin-left: 17px; color: #d4d4d4; }
.weekdays { margin-top: 7px; height: 24px; display: grid; grid-template-columns: repeat(7, 1fr); text-align: center; color: #6a6a6a; align-items: center; }
.days { margin-top: 3px; display: grid; grid-template-columns: repeat(7, 1fr); border-top: 1px solid #333; border-left: 1px solid #333; height: 80px; }
.day { border-right: 1px solid #333; text-align: right; padding: 4px 10px 0 0; color: #d4d4d4; height: 80px; line-height: 20px; }
.day:first-child { padding-right: 12px; }
.now { display: inline-block; width: 24px; height: 24px; border-radius: 50%; background: #cf4b4b; color: #fff; text-align: center; line-height: 24px; font-style: normal; margin: -2px -5px 0 0; }

/* right */
.over { height: 603px; padding: 0 18px 0 20px; }
.gal-tools { height: 54px; padding: 14px 0 0 14px; display: flex; align-items: center; gap: 13px; border-bottom: 1px solid #2e2e2e; }
.meter-card { margin-top: 16px; height: 461px; background: #323232; border-radius: 4px; padding: 34px 0 0 11px; }
.meter { height: 54px; }
.m-lab { display: inline-flex; align-items: center; height: 16px; font-size: 12px; padding-right: 1px; white-space: nowrap; letter-spacing: -.035em; }
.rad { width: 8px; height: 8px; border-radius: 50%; border: 1px solid currentColor; margin: 0 5px 0 1px; display: block; box-shadow: inset 0 0 0 1.500px #323232; background: currentColor; }
.m-line { position: relative; margin: 10px 0 0 33px; width: 130px; height: 1px; background: currentColor; }
.m-th { position: absolute; top: -5px; width: 10px; height: 10px; border-radius: 50%; background: currentColor; }
.m-g { color: #4e9f70; } .m-g .m-lab { background: #24402f; }
.m-b { color: #5586d8; } .m-b .m-lab { background: #143d55; }
.m-r { color: #e05050; } .m-r .m-lab { background: #552b2b; }
.m-o { color: #cd7e42; } .m-o .m-lab { background: #5c3a1e; }
.m-e { color: #b98a6c; } .m-e .m-lab { background: #4e2f27; }
.m-p { color: #9b63dc; } .m-p .m-lab { background: #3c2d52; }
.m-s { color: #d04f92; } .m-s .m-lab { background: #532a40; }
.m-t { color: #cf9a3c; } .m-t .m-lab { background: #5b4528; }
.new-btn { margin-top: 16px; height: 40px; border: 1px solid #3f3f3f; border-radius: 6px; display: flex; align-items: center; justify-content: center; gap: 7px; color: #585858; }
.ent { padding: 20px 18px 0 20px; height: 200px; }
.ent-tools { height: 33px; display: flex; align-items: flex-start; border-bottom: 1px solid #2e2e2e; padding-left: 14px; }
.ent-tools svg { margin-top: 7px; }
.ent-tools .ic10 { margin: 9px 0 0 13px; }
.exp { margin-left: 52px; color: #777; }
.ent-more { margin-left: 17px; color: #7a7a7a; }
.blue-btn { margin-left: auto; height: 28px; width: 69px; background: #2383e2; border-radius: 4px; display: flex; align-items: center; color: #fff; font-weight: 700; }
.blue-btn b { width: 45px; text-align: center; border-right: 1px solid #4a9be8; height: 28px; line-height: 28px; }
.blue-btn i { flex: 1; display: flex; justify-content: center; }
.blue-btn .ic10 { margin: 0; color: #fff; }
.ent-card { margin-top: 16px; background: #2f2f2f; border-radius: 4px; height: 72px; padding: 12px 11px 0; }
.ent-date { display: flex; align-items: center; gap: 8px; height: 16px; color: #6f6f6f; font-weight: 600; margin-left: 0; }
.ent-line { margin-top: 12px; display: inline-flex; align-items: center; height: 16px; background: #5b4528; font-size: 12px; color: #d6d6d6; white-space: pre; width: 187px; }
.tired { color: #c98a44; }

/* overlays */
.ghost-menu { position: absolute; left: 28px; top: 17px; display: flex; flex-direction: column; color: #2b2b2b; line-height: 28px; }
.ghost-menu span { position: relative; width: 72px; }
.ghost-menu span::after { content: "›"; position: absolute; right: 0; top: 0; }
.block-tools { position: absolute; left: 1498px; top: 169px; display: flex; gap: 7px; color: #555; }
.vscroll { position: absolute; right: 2px; top: 0; bottom: 0; width: 13px; }
.vup, .vdn { position: absolute; left: 2px; border: 4px solid transparent; }
.vup { top: 2px; border-bottom: 5px solid #555; }
.vdn { bottom: 2px; border-top: 5px solid #555; }
.vthumb { position: absolute; top: 88px; left: 0; width: 13px; height: 340px; background: #4e4e4e; }
.spark { position: absolute; left: 1856px; top: 932px; width: 36px; height: 36px; border-radius: 50%; background: #252525; display: flex; align-items: center; justify-content: center; }

/* taskbar */
.taskbar { position: relative; height: 40px; flex: none; background: #1c282d; border-top: 1px solid #3a3f42; display: flex; align-items: center; color: #e8e8e8; }
.tb-win { width: 18px; height: 18px; margin-left: 15px; }
.tb-search { margin-left: 15px; width: 288px; height: 39px; background: #343434; border: 1px solid #565656; border-width: 0 1px; display: flex; align-items: center; gap: 12px; padding-left: 11px; font-size: 15px; color: #c8c8c8; letter-spacing: -.015em; }
.tb-view { width: 16px; height: 16px; margin-left: 16px; }
.tb-apps { margin-left: 19px; display: flex; height: 39px; }
.app-t { position: relative; width: 49px; height: 39px; display: flex; align-items: center; justify-content: center; }
.app-t.active { background: #3f4a4f; box-shadow: inset 0 -2px #a9aeb0; width: 48px; }
.app-t.under::after { content: ""; position: absolute; left: 5px; right: 4px; bottom: 0; height: 2px; background: #a9aeb0; }
.n-wht { color: #eee; }
.prof { position: absolute; left: 27px; top: 20px; width: 15px; height: 15px; border-radius: 50%; background: #6a1fa8; color: #ddd; font: 9px/15px "Open Sans", sans-serif; text-align: center; }
.tb-tray { margin-left: auto; display: flex; align-items: center; height: 39px; }
.wx { position: relative; display: flex; align-items: center; gap: 8px; width: 133px; font-size: 14px; letter-spacing: -.035em; }
.wx-ic { width: 25px; height: 19px; margin-right: 0; }
.wx-badge { position: absolute; left: 15px; top: -5px; width: 11px; height: 13px; border-radius: 6px; background: #d13438; color: #fff; font: 9px/13px "Open Sans", sans-serif; text-align: center; }
.tray { width: 23.700px; display: flex; justify-content: center; }
.tray.wide { width: 30px; }
.tray.kb { width: 32px; margin-left: 2px; }
.kb-ic { width: 24px; height: 14px; }
.eng { margin-left: 8px; width: 38px; white-space: nowrap; font-size: 14px; }
.clock { display: flex; flex-direction: column; width: 50px; font-size: 13px; line-height: 19px; text-align: left; white-space: nowrap; letter-spacing: -.01em; }
.notif { position: relative; margin: 0 23px 0 19px; }
.n-badge { position: absolute; left: 8px; top: 6px; width: 16px; height: 16px; border-radius: 50%; border: 1px solid #999; background: #1c282d; color: #ddd; font: 11px/14px "Open Sans", sans-serif; text-align: center; }
.tb-edge { position: absolute; right: 3px; top: 0; height: 39px; width: 1px; background: #5a6a70; }
```

FILE: script.js
```js
(function () {
  var head = "oo" + "O" + "ooo" + "N" + "oooo" + "D" + "ooo" + "J" + "oooo" + "F" + "ooo" + "M" + "ooo" + "A" + "ooo" + "M" + "oooo" + "J" + "ooo" + "J" + "oooo" + "A" + "ooo" + "S";
  var days = ["Sun", "Mon", "Tue", "Wed", "Thu", "Fri", "Sat"];
  var pad = function (n) { return new Array(n + 1).join("."); };
  var rows = [
    pad(33) + "G..SSOSOGGSGSGTPPE",
    pad(34) + "O.SSTOOGSSRGGRPTO",
    pad(34) + "S..GGOOGSG.S..BPR",
    pad(36) + "G.G.GGSGR.TRBGB",
    pad(24) + "O...G......S.GEOSG.GRSERPTG",
    ".." + "G" + pad(31) + "O.ESEGGGSGRRETPTT",
    pad(31) + "R...G.SGS.GGRRSTP.P "
  ];
  var heat = document.getElementById("heat");
  function cell(cls, text) {
    var el = document.createElement("span");
    el.className = "c " + cls;
    if (text) { el.textContent = text; }
    heat.appendChild(el);
  }
  cell("corner");
  head.split("").forEach(function (ch) {
    if (ch === "o") { cell("hd circ", "○"); } else { cell("hd", ch); }
  });
  days.forEach(function (d, r) {
    cell("day-l", d);
    for (var i = 0; i < 51; i++) {
      var v = rows[r].charAt(i);
      if (v === " ") { heat.appendChild(document.createElement("span")); continue; }
      cell(v && v !== "." ? "k-" + v.toLowerCase() : "");
    }
  });
})();
```
